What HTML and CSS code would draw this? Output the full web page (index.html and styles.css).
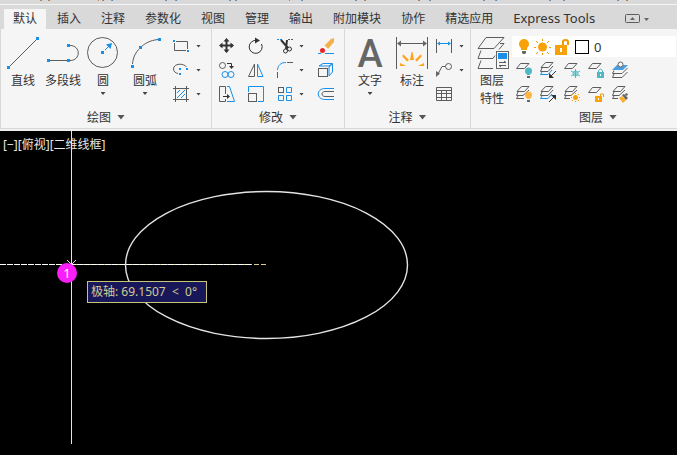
FILE: index.html
```html
<!DOCTYPE html>
<html lang="zh-CN">
<head>
    <meta charset="UTF-8">
    <meta name="viewport" content="width=device-width, initial-scale=1.0">
    <title>CAD</title>
    <link rel="stylesheet" href="styles.css">
</head>
<body>

    <header>
        <div class="top-strip">
            <svg width="677" height="3">
                <path class="orange-mark" d="M40 0.5h1M48 0.5h1M98 0.5h1M102 0.5h1M111 0.5h1M165 0.5h1M175 0.5h1M229 0.5h1M235 0.5h1M289 0.5h1M301 0.5h1M355 0.5h1M364 0.5h1M418 0.5h1M429 0.5h1M483 0.5h1M495 0.5h1M549 0.5h1M563 0.5h1M617 0.5h1M626 0.5h1"/>
                <path class="blue-mark" d="M41 0.5h1M49 0.5h1M103 0.5h1M112 0.5h1M166 0.5h1M176 0.5h1M230 0.5h1M236 0.5h1M302 0.5h1M356 0.5h1M365 0.5h1M419 0.5h1M430 0.5h1M484 0.5h1M496 0.5h1M550 0.5h1M564 0.5h1M618 0.5h1M627 0.5h1"/>
            </svg>
        </div>

        <nav class="tabs">
            <button class="tab active">默认</button>
            <button class="tab">插入</button>
            <button class="tab">注释</button>
            <button class="tab">参数化</button>
            <button class="tab">视图</button>
            <button class="tab">管理</button>
            <button class="tab">输出</button>
            <button class="tab">附加模块</button>
            <button class="tab">协作</button>
            <button class="tab">精选应用</button>
            <button class="tab latin">Express Tools</button>
            <button class="tab minimize" aria-label="最小化">
                <svg width="26" height="12">
                    <rect class="line" x="0.5" y="1.5" width="14" height="8" rx="1"/>
                    <path class="line-fill" d="M5 7h5l-2.5-3zM19 5h5l-2.5 3z"/>
                </svg>
            </button>
        </nav>

        <div class="ribbon">
            <!-- Draw -->
            <section class="panel">
                <div class="tools draw">
                    <button class="big">
                        <svg width="36" height="36">
                            <path class="line" d="M5 32L31 6"/>
                            <path class="node" d="M2 32h3v3h-3zM31 3h3v3h-3z"/>
                        </svg>
                        <span>直线</span>
                    </button>
                    <button class="big">
                        <svg width="36" height="36">
                            <path class="line" d="M5 26.5H22M25 11.5C36 11.5 36 26.5 25 26.5"/>
                            <path class="node" d="M2 25h3v3h-3zM22 25h3v3h-3zM22 10h3v3h-3z"/>
                        </svg>
                        <span>多段线</span>
                    </button>
                    <button class="big">
                        <svg width="36" height="36">
                            <circle class="line" cx="17.5" cy="18.5" r="15"/>
                            <path class="node" d="M16 17h3v3h-3zM27 9l-1.5 6-4.5-4.5z"/>
                            <path class="blue" d="M20 16l4-4"/>
                        </svg>
                        <span>圆</span>
                        <i class="caret"></i>
                    </button>
                    <button class="big wide">
                        <svg width="36" height="36">
                            <path class="line" d="M5.5 30C6 23 9 18 13 14C18 9 23 6.5 31 5.5"/>
                            <path class="node" d="M4 31h3v3h-3zM12 12h3v3h-3zM31 4h3v3h-3z"/>
                        </svg>
                        <span>圆弧</span>
                        <i class="caret"></i>
                    </button>
                    <div class="small-tools">
                        <button class="small" aria-label="矩形">
                            <svg width="20" height="20">
                                <path class="line" d="M4 5.5H15.5V13M2.5 7V14.5H14"/>
                                <path class="node" d="M1 4h2v2h-2zM15 14h2v2h-2z"/>
                            </svg>
                            <i class="caret"></i>
                        </button>
                        <button class="small" aria-label="椭圆">
                            <svg width="20" height="20">
                                <path class="line" d="M14.5 7C12 3 1.5 3 1.5 9C1.5 12 4 13 6 13.5"/>
                                <path class="node" d="M7 8h2v2h-2zM14 8h2v2h-2zM7 13h2v2h-2z"/>
                            </svg>
                            <i class="caret"></i>
                        </button>
                        <button class="small" aria-label="图案填充">
                            <svg width="20" height="20">
                                <path class="line" d="M3.5 2V18M14.5 2V18M1 4.5H17M1 15.5H17"/>
                                <path class="blue" d="M5 9l3-3M5 14l8-8M9 14l4-4"/>
                            </svg>
                            <i class="caret"></i>
                        </button>
                    </div>
                </div>
                <button class="panel-title">绘图<i class="caret large"></i></button>
            </section>

            <!-- Modify -->
            <section class="panel">
                <div class="tools modify">
                    <button class="small" aria-label="移动">
                        <svg width="20" height="20">
                            <path class="dark thick" d="M9.5 4V16M4 9.5H16"/>
                            <path class="dark-fill" d="M9.5 2l3 3.5h-6zM9.5 17l3-3.5h-6zM2 9.5l3.5-3v6zM17 9.5l-3.5-3v6z"/>
                        </svg>
                    </button>
                    <button class="small" aria-label="旋转">
                        <svg width="20" height="20">
                            <path class="dark" d="M11 4.5A6.5 6.5 0 1 0 15.5 8"/>
                            <path class="dark-fill" d="M9 1.5l5 3-5 3z"/>
                        </svg>
                    </button>
                    <button class="small" aria-label="修剪">
                        <svg width="20" height="20">
                            <path class="blue dashes" d="M2 3.5H8"/>
                            <path class="line dashes" d="M13 3.5H18"/>
                            <path class="dark thick" d="M6 4L13 12M12 4L11 13"/>
                            <circle class="dark" cx="10.5" cy="15" r="2"/>
                            <circle class="dark" cx="14.5" cy="13" r="2"/>
                        </svg>
                        <i class="caret"></i>
                    </button>
                    <button class="small" aria-label="删除">
                        <svg width="20" height="20">
                            <path fill="#f5b14b" d="M8 10L15 3l3-1v4l-6 7z"/>
                            <path fill="#fff" d="M7 11l1.5-1.5L12 13l-2 1.5z"/>
                            <circle fill="#e8252b" cx="6.5" cy="14.5" r="2.5"/>
                            <path class="blue" d="M2 17.5h3M9 17.5h9"/>
                        </svg>
                    </button>
                    <button class="small" aria-label="复制">
                        <svg width="20" height="20">
                            <circle class="line" cx="5.5" cy="5.5" r="3"/>
                            <circle class="blue" cx="8" cy="14.5" r="3"/>
                            <circle class="blue" cx="14" cy="14.5" r="3"/>
                            <path class="dark" d="M10 3.5h4.5v3"/>
                            <path class="dark-fill" d="M12 6h5l-2.5 3z"/>
                        </svg>
                    </button>
                    <button class="small" aria-label="镜像">
                        <svg width="20" height="20">
                            <path class="line" d="M8.5 4V16.5H2.5z"/>
                            <path class="blue" d="M11.5 4V16.5H17z"/>
                        </svg>
                    </button>
                    <button class="small" aria-label="圆角">
                        <svg width="20" height="20">
                            <path class="blue" d="M2.5 10C3 5 6 2.5 11 2.5"/>
                            <path class="line" d="M12 2.5H18M2.5 12V18"/>
                        </svg>
                        <i class="caret"></i>
                    </button>
                    <button class="small" aria-label="分解">
                        <svg width="20" height="20">
                            <path class="blue" d="M3 6L7 3.5H16.5L13 6zM16.5 4V12L13 16V7z"/>
                            <rect class="line" x="2.5" y="8.5" width="9" height="8"/>
                        </svg>
                    </button>
                    <button class="small" aria-label="拉伸">
                        <svg width="20" height="20">
                            <path class="line" d="M8.5 10V2.5H2.5V17.5H8.5V15"/>
                            <path class="blue" d="M10 2.5h2.5L17.5 17.5H10"/>
                            <path class="dark" d="M6 12.5h5"/>
                            <path class="dark-fill" d="M10 10l3 2.5-3 2.5z"/>
                        </svg>
                    </button>
                    <button class="small" aria-label="缩放">
                        <svg width="20" height="20">
                            <path class="blue" d="M2.5 8V2.5H17.5V17.5H12"/>
                            <rect class="line" x="2.5" y="9.5" width="8" height="8"/>
                        </svg>
                    </button>
                    <button class="small" aria-label="阵列">
                        <svg width="20" height="20">
                            <rect class="line" x="3.5" y="3.5" width="5" height="5"/>
                            <path class="blue" d="M11.5 3.5h5v5h-5zM3.5 11.5h5v5h-5zM11.5 11.5h5v5h-5z"/>
                        </svg>
                        <i class="caret"></i>
                    </button>
                    <button class="small" aria-label="偏移">
                        <svg width="20" height="20">
                            <path class="blue" d="M18 4.5H9C0 4.5 0 15.5 9 15.5H18"/>
                            <path class="line" d="M18 7.5H9C5 7.5 5 12.5 9 12.5H18"/>
                        </svg>
                    </button>
                </div>
                <button class="panel-title">修改<i class="caret large"></i></button>
            </section>

            <!-- Annotate -->
            <section class="panel">
                <div class="tools annotate">
                    <button class="big">
                        <b class="letter">A</b>
                        <span>文字</span>
                        <i class="caret"></i>
                    </button>
                    <button class="big">
                        <svg width="36" height="36">
                            <path class="line" d="M2.5 3V35M33.5 3V35M4 9.5H32"/>
                            <path class="line-fill" d="M3 9.5l4-3v6zM33 9.5l-4-3v6z"/>
                            <path fill="#ffa31a" d="M16 26l1.5-8h1l1.5 8zM13 27.5L8 22l1.5-1.5L15 26zM23 27.5l5-5.5-1.5-1.5L21 26zM12 32H6v-3zM24 32h6v-3z"/>
                        </svg>
                        <span>标注</span>
                    </button>
                    <div class="small-tools">
                        <button class="small" aria-label="线性">
                            <svg width="20" height="20">
                                <path class="line" d="M1.5 3V17M16.5 3V17"/>
                                <path class="blue" d="M3 7.5h12"/>
                                <path class="node" d="M2 7.5l3-2v4zM16 7.5l-3-2v4z"/>
                            </svg>
                            <i class="caret"></i>
                        </button>
                        <button class="small" aria-label="引线">
                            <svg width="20" height="20">
                                <circle class="line" cx="13.5" cy="6.5" r="3"/>
                                <path class="line" d="M10 6.5H7L3.5 13"/>
                                <path class="line-fill" d="M1 17V11l4 2.5z"/>
                            </svg>
                            <i class="caret"></i>
                        </button>
                        <button class="small" aria-label="表格">
                            <svg width="20" height="20">
                                <path class="line" d="M1.5 3.5h15v13h-15zM1 6.5h15M1 9.5h15M1 13.5h15M6.5 7v9M11.5 7v9"/>
                            </svg>
                        </button>
                    </div>
                </div>
                <button class="panel-title">注释<i class="caret large"></i></button>
            </section>

            <!-- Layers -->
            <section class="panel layers">
                <div class="tools">
                    <button class="big">
                        <svg width="36" height="36">
                            <path class="line" d="M12 3.5H30L20 14.5H4z"/>
                            <path class="line" d="M7 16.5L4 24.5H19L21 21.5M25 15.5L30 9.5H26M7 26.5L4 34.5H19"/>
                            <rect class="panel-box" x="22.5" y="17.5" width="12" height="17"/>
                            <path class="node" d="M24 19h9v6h-9z"/>
                            <path class="line" d="M25 28.5h7M25 31.5h7M30 27l2 1.5M27 33l-2-1.5"/>
                        </svg>
                        <span>图层<br>特性</span>
                    </button>
                    <div class="layer-tools">
                        <div class="layer-box">
                            <svg width="72" height="20">
                                <circle class="amber-fill" cx="7" cy="7" r="5"/>
                                <path class="amber-fill" d="M4 10h6v3h-6z"/>
                                <path class="line-fill" d="M5 14h4v2l-1 1h-2l-1-1z"/>
                                <circle class="amber-fill" cx="25.5" cy="10" r="4.5"/>
                                <path class="amber" d="M25.5 2v2M25.5 16v2M17 10.5h2M32 10.5h2M19 4l2 2M32 4l-2 2M19 17l2-2M32 17l-2-2"/>
                                <path class="amber-fill" d="M38 8h12v10h-12z"/>
                                <path class="amber thick" d="M46 8V4.5Q46 3 48.5 3Q51 3 51 5V8"/>
                                <path fill="#fff" d="M43 11h2v4h-2z"/>
                                <rect class="swatch" x="58.5" y="3.5" width="13" height="13"/>
                            </svg>
                            <select aria-label="图层">
                                <option>0</option>
                            </select>
                        </div>
                        <div class="layer-icons">
                            <button class="small" aria-label="关">
                                <svg width="20" height="20">
                                    <path class="line" d="M6.5 3.5H15L10.5 8.5H2.5z"/>
                                    <circle class="teal-fill" cx="14.5" cy="11" r="3.5"/>
                                    <path class="teal-fill" d="M13 13h3v2h-3z"/>
                                    <path class="line-fill" d="M13 16h3v2h-3z"/>
                                </svg>
                            </button>
                            <button class="small" aria-label="隔离">
                                <svg width="20" height="20">
                                    <path class="line" d="M7.5 2.5H15L10.5 7.5H3z"/>
                                    <path class="line" d="M4 8l-1.5 3.5H10L15 6"/>
                                    <path class="blue" d="M4 12l-1.5 2.5H10L14 10"/>
                                    <path class="dark" d="M18 11l-5 5"/>
                                    <path class="dark-fill" d="M11 18v-5l5 5z"/>
                                </svg>
                            </button>
                            <button class="small" aria-label="冻结">
                                <svg width="20" height="20">
                                    <path class="line" d="M6.5 3.5H15L10.5 8.5H2.5z"/>
                                    <circle class="teal" cx="13.5" cy="13.5" r="2.5"/>
                                    <path class="teal" d="M13.5 9v9M9 11l9 5M9 16l9-5"/>
                                </svg>
                            </button>
                            <button class="small" aria-label="锁定">
                                <svg width="20" height="20">
                                    <path class="line" d="M6.5 3.5H15L10.5 8.5H2.5z"/>
                                    <path class="teal-fill" d="M11 12h7v6h-7z"/>
                                    <path class="teal" d="M12.5 12V10.5Q14.5 7.5 16.5 10.5V12"/>
                                    <path fill="#fff" d="M14 14h1v2h-1z"/>
                                </svg>
                            </button>
                            <button class="small" aria-label="置为当前">
                                <svg width="20" height="20">
                                    <path fill="#4a9fe0" d="M7 5h11l-5 5h-11z"/>
                                    <circle class="panel-box" cx="10.5" cy="4.5" r="2.5"/>
                                    <path class="line" d="M4 10.5L2.5 13.5H12L17.5 8M4 14L2.5 17.5H12L17.5 12"/>
                                </svg>
                            </button>
                            <button class="small" aria-label="打开所有图层">
                                <svg width="20" height="20">
                                    <path class="line" d="M7.5 2.5H15L10.5 7.5H3zM4 8l-1.5 3.5H9L15 6M4 12l-1.5 2.5H10"/>
                                    <circle fill="#ffb53f" cx="14.5" cy="11" r="3.5"/>
                                    <path fill="#ffb53f" d="M13 13h3v2h-3z"/>
                                    <path class="line-fill" d="M13 16h3v2h-3z"/>
                                </svg>
                            </button>
                            <button class="small" aria-label="取消隔离">
                                <svg width="20" height="20">
                                    <path class="line" d="M7.5 2.5H15L10.5 7.5H3zM4 8l-1.5 3.5H10L15 6"/>
                                    <path class="blue" d="M4 12l-1.5 2.5H10L14 10"/>
                                    <path class="dark" d="M11 18l5-5"/>
                                    <path class="dark-fill" d="M18 11v5l-5-5z"/>
                                </svg>
                            </button>
                            <button class="small" aria-label="解冻所有图层">
                                <svg width="20" height="20">
                                    <path class="line" d="M7.5 2.5H15L10.5 7.5H3zM4 8l-1.5 3.5H9L15 6M4 12l-1.5 2.5H8"/>
                                    <circle class="amber-fill" cx="13.5" cy="13.5" r="2.5"/>
                                    <path class="amber" d="M13.5 9v1M13.5 17v1M9 13.5h1M17 13.5h1M10 10l1 1M17 10l-1 1M10 17l1-1M17 17l-1-1"/>
                                </svg>
                            </button>
                            <button class="small" aria-label="解锁">
                                <svg width="20" height="20">
                                    <path class="line" d="M6.5 3.5H15L10.5 8.5H2.5z"/>
                                    <path class="amber-fill" d="M9 12h7v6h-7z"/>
                                    <path class="amber" d="M14.5 12V10H17.5V13"/>
                                    <path fill="#fff" d="M12 14h1v2h-1z"/>
                                </svg>
                            </button>
                            <button class="small" aria-label="匹配图层">
                                <svg width="20" height="20">
                                    <path class="line" d="M7.5 2.5H15L10.5 7.5H3zM4 8l-1.5 3.5H9L15 6M4 12l-1.5 2.5H8"/>
                                    <path fill="#ffab2e" d="M9 14l3-2 4 4-3 3z"/>
                                    <path class="line-fill" d="M12 11l2-1 4 4-2 2zM15 10l2-1 1 2-2 1z"/>
                                </svg>
                            </button>
                        </div>
                    </div>
                </div>
                <button class="panel-title">图层<i class="caret large"></i></button>
            </section>
        </div>
    </header>

    <main class="canvas">
        <div class="view-label">[−][俯视][二维线框]</div>
        <svg class="drawing" width="677" height="324">
            <ellipse cx="266.5" cy="134" rx="141" ry="73.5"/>
            <path d="M71.5 0V313"/>
            <path class="polar-line" d="M72 133.5H267"/>
            <path class="cursor-line" d="M0 133.5H252"/>
            <path d="M67 129l8 8M76 129l-8 8"/>
        </svg>
        <span class="badge">1</span>
        <div class="tooltip">极轴: 69.1507 &nbsp;&lt; &nbsp;0°</div>
    </main>

</body>
</html>
```

FILE: styles.css
```css
* {
    box-sizing: border-box;
}
body {
    display: flex;
    flex-direction: column;
    min-height: 100vh;
    margin: 0;
    overflow-x: hidden;
    background-color: #000;
    color: #333;
    font-family: "Noto Sans", "Noto Sans CJK SC", sans-serif;
    font-size: 12px;
}
button, select {
    margin: 0;
    padding: 0;
    border: none;
    background: none;
    color: inherit;
    font: inherit;
}
svg {
    display: block;
    flex-shrink: 0;
    fill: none;
}

/* header */
.top-strip {
    height: 5px;
    overflow: hidden;
    background-color: #d9d9d9;
    border-bottom: 1px solid #f5f5f5;
}
.orange-mark {
    stroke: #b98a5a;
}
.blue-mark {
    stroke: #5a86b0;
}
.tabs {
    display: flex;
    height: 24px;
    padding: 4px 0 0 3px;
    background-color: #d9d9d9;
}
.tab {
    margin: 0 1px;
    padding: 0 9px;
    line-height: 20px;
    white-space: nowrap;
}
.tab.active {
    background-color: #f5f5f5;
}
.tab.latin {
    padding-bottom: 2px;
    font-size: 13px;
    line-height: 18px;
}
.tab.minimize {
    display: flex;
    align-items: center;
    padding: 0 19px;
}

/* ribbon */
.ribbon {
    display: flex;
    height: 102px;
    background-color: #f5f5f5;
    border-bottom: 2px solid #f0f0f0;
}
.panel {
    display: flex;
    flex-direction: column;
    border-left: 1px solid #d9d9d9;
    border-bottom: 1px solid #d9d9d9;
}
.panel.layers {
    flex: 1;
}
.tools {
    display: flex;
    padding: 5px 1px 0;
}
.tools.draw {
    padding: 5px 10px 0 2px;
}
.tools.modify {
    display: grid;
    grid-template-columns: 20px 20px 32px 20px;
    column-gap: 9px;
    padding: 5px 8px 0 5px;
}
.tools.annotate {
    padding: 5px 6px 0 4px;
}
.big {
    display: flex;
    flex-direction: column;
    align-items: center;
    width: 40px;
    height: 72px;
    line-height: 18px;
    white-space: nowrap;
}
.big.wide {
    width: 44px;
}
.annotate .big {
    width: 42px;
}
.big span {
    margin-top: 2px;
}
.big .caret {
    margin-top: 2px;
}
.letter {
    height: 36px;
    color: #666;
    font-family: Roboto, sans-serif;
    font-size: 38px;
    font-weight: 500;
    line-height: 40px;
}
.small-tools {
    margin-left: 5px;
}
.annotate .small-tools {
    margin-left: 2px;
}
.small {
    display: flex;
    align-items: center;
    height: 24px;
}
.small .caret {
    margin-left: 4px;
}
.caret {
    flex-shrink: 0;
    width: 5px;
    height: 3px;
    background-color: #444;
    clip-path: polygon(0 0, 100% 0, 50% 100%);
}
.caret.large {
    width: 8px;
    height: 5px;
    background-color: #555;
}
.panel-title {
    display: flex;
    flex: 1;
    align-items: center;
    justify-content: center;
    gap: 6px;
}
.layers .panel-title {
    padding-left: 48px;
}

/* layers */
.layer-tools {
    flex: 1;
}
.layer-box {
    display: flex;
    align-items: center;
    height: 21px;
    margin-top: 2px;
    padding-left: 5px;
    background-color: #fff;
}
.layer-box select {
    flex: 1;
    margin-left: 5px;
    font-size: 13px;
    appearance: none;
}
.layer-icons {
    display: grid;
    grid-template-columns: repeat(5, 20px);
    column-gap: 4px;
    padding: 1px 2px 0;
}

/* icon strokes and fills */
.line {
    stroke: #5c5c5c;
}
.blue {
    stroke: #1a8fe8;
}
.dark {
    stroke: #333;
}
.teal {
    stroke: #4fb8c4;
}
.amber {
    stroke: #f09c00;
}
.thick {
    stroke-width: 2;
}
.dashes {
    stroke-dasharray: 2 1;
}
.node {
    fill: #1a8fe8;
}
.line-fill {
    fill: #666;
}
.dark-fill {
    fill: #333;
}
.teal-fill {
    fill: #4fb8c4;
}
.amber-fill {
    fill: #f9a208;
}
.panel-box {
    fill: #f5f5f5;
    stroke: #666;
}
.swatch {
    fill: #fff;
    stroke: #000;
}

/* drawing area */
.canvas {
    position: relative;
    flex: 1;
    overflow: hidden;
    background-color: #000;
}
.view-label {
    padding: 4px 3px;
    color: #e8e8e8;
    line-height: 20px;
}
.drawing {
    position: absolute;
    top: 0;
    left: 0;
    stroke: #e4e4e4;
}
.drawing ellipse {
    stroke-width: 1.4;
}
.cursor-line {
    stroke: #fff;
    stroke-dasharray: 6 1;
}
.polar-line {
    stroke: #d8d08a;
    stroke-dasharray: 5 2;
}
.badge {
    position: absolute;
    top: 132px;
    left: 57px;
    width: 20px;
    height: 20px;
    border-radius: 50%;
    background-color: #fa1efa;
    color: #fff;
    font-size: 13px;
    line-height: 20px;
    text-align: center;
}
.tooltip {
    position: absolute;
    top: 150px;
    left: 87px;
    width: 120px;
    height: 22px;
    padding-left: 3px;
    border: 1px solid #c8c478;
    background-color: #17175a;
    color: #d0cc90;
    line-height: 20px;
    white-space: nowrap;
}
```
